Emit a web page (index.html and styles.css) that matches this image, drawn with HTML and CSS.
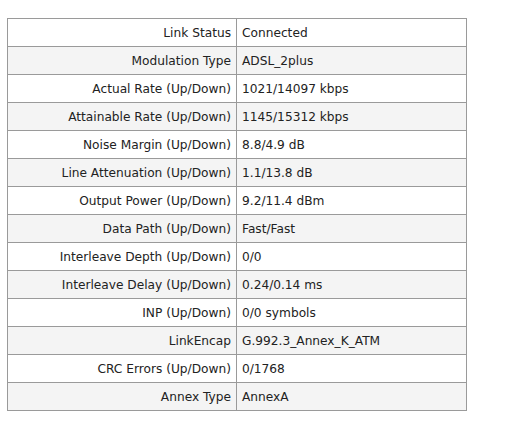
FILE: index.html
```html
<!DOCTYPE html>
<html>
<head>
<meta charset="utf-8">
<link rel="stylesheet" href="styles.css">
</head>
<body>
<table class="status">
  <tr><td class="label">Link Status</td><td class="value">Connected</td></tr>
  <tr class="alt"><td class="label">Modulation Type</td><td class="value">ADSL_2plus</td></tr>
  <tr><td class="label">Actual Rate (Up/Down)</td><td class="value">1021/14097 kbps</td></tr>
  <tr class="alt"><td class="label">Attainable Rate (Up/Down)</td><td class="value">1145/15312 kbps</td></tr>
  <tr><td class="label">Noise Margin (Up/Down)</td><td class="value">8.8/4.9 dB</td></tr>
  <tr class="alt"><td class="label">Line Attenuation (Up/Down)</td><td class="value">1.1/13.8 dB</td></tr>
  <tr><td class="label">Output Power (Up/Down)</td><td class="value">9.2/11.4 dBm</td></tr>
  <tr class="alt"><td class="label">Data Path (Up/Down)</td><td class="value">Fast/Fast</td></tr>
  <tr><td class="label">Interleave Depth (Up/Down)</td><td class="value">0/0</td></tr>
  <tr class="alt"><td class="label">Interleave Delay (Up/Down)</td><td class="value">0.24/0.14 ms</td></tr>
  <tr><td class="label">INP (Up/Down)</td><td class="value">0/0 symbols</td></tr>
  <tr class="alt"><td class="label">LinkEncap</td><td class="value">G.992.3_Annex_K_ATM</td></tr>
  <tr><td class="label">CRC Errors (Up/Down)</td><td class="value">0/1768</td></tr>
  <tr class="alt"><td class="label">Annex Type</td><td class="value">AnnexA</td></tr>
</table>
</body>
</html>
```
FILE: styles.css
```css
html, body {
  margin: 0;
  background: #fff;
}
body {
  padding: 18px 0 0 7px;
  font-family: "DejaVu Sans", Verdana, sans-serif;
  font-size: 12.2px;
  color: #222;
}
.status {
  border-collapse: collapse;
  width: 460px;
  table-layout: fixed;
}
.status td {
  border: 1px solid #9a9a9a;
  height: 28px;
  padding: 0;
  box-sizing: border-box;
  vertical-align: middle;
  line-height: 14px;
}
.status .label {
  width: 229px;
  text-align: right;
  padding-right: 5px;
}
.status .value {
  text-align: left;
  padding-left: 5px;
}
.status tr.alt td {
  background: #f4f4f4;
}
```
